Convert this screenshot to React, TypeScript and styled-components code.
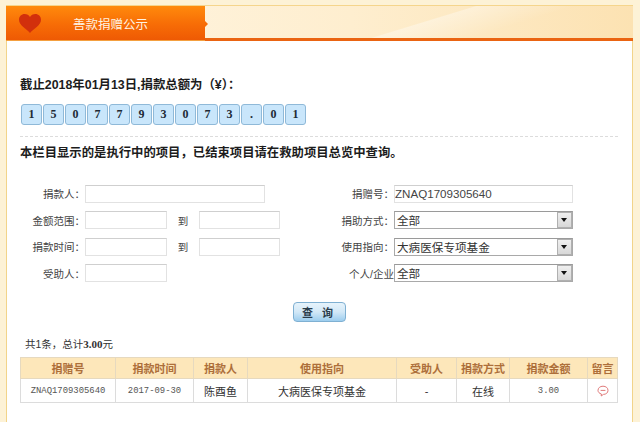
import React from "react";
import styled, { createGlobalStyle } from "styled-components";

const CJK = `"Liberation Sans", "Noto Sans CJK SC", sans-serif`;
const SERIF = `"Liberation Serif", "Noto Sans CJK SC", serif`;
const MONO = `"Liberation Mono", "Noto Sans CJK SC", monospace`;

const GlobalStyle = createGlobalStyle`
  html, body {
    margin: 0;
    padding: 0;
    background: #fdf2d6;
  }
  * {
    box-sizing: border-box;
  }
`;

const Page = styled.div`
  width: 640px;
  height: 422px;
  overflow: hidden;
  padding: 5px 6px 0;
  font-family: ${CJK};
  color: #222;
`;

const Panel = styled.div`
  width: 627px;
  height: 417px;
  background: #fff;
  border-left: 1px solid #f2d48a;
  border-right: 1px solid #f2d48a;
  border-top: 1px solid #f5d58c;
`;

const Banner = styled.div`
  display: flex;
  height: 35px;
  margin: 0 -1px;
  background:
    linear-gradient(163deg, rgba(255, 255, 255, 0) 64%, rgba(255, 255, 255, 0.35) 64.5%, rgba(255, 255, 255, 0) 78%),
    linear-gradient(90deg, #fff6e4 0%, #feeecf 55%, #fce2b2 100%);
  border-bottom: 3px solid #ea6412;
`;

const BannerTab = styled.div`
  position: relative;
  width: 199px;
  height: 35px;
  display: flex;
  align-items: center;
  padding-left: 13px;
  background: linear-gradient(180deg, #ff8a0c 0%, #f76c06 55%, #ee5a04 100%);
  border-bottom: 1px solid #f4a040;

  &::after {
    content: "";
    position: absolute;
    right: -3px;
    top: 15px;
    border-left: 3px solid #f76c06;
    border-top: 3px solid transparent;
    border-bottom: 3px solid transparent;
  }
`;

const Heart = styled.svg`
  width: 22px;
  height: 19px;
`;

const BannerTitle = styled.h1`
  margin: 0 0 0 32px;
  font-size: 12.5px;
  font-weight: 400;
  color: #fff3e2;
  white-space: nowrap;
`;

const Body = styled.div`
  padding: 35px 14px 0 13px;
`;

const TotalLine = styled.div`
  height: 16px;
  line-height: 18px;
  font-size: 12.4px;
  font-weight: 700;
  color: #1c1c1c;
  white-space: nowrap;
`;

const Digits = styled.div`
  display: flex;
  gap: 1px;
  margin: 12px 0 0 1px;
`;

const Digit = styled.span`
  width: 21px;
  height: 21px;
  display: flex;
  align-items: center;
  justify-content: center;
  background: #c9e6fb;
  border: 1px solid #8fb9d8;
  border-radius: 3px;
  font-family: ${SERIF};
  font-size: 12px;
  font-weight: 700;
  color: #1d2a35;
`;

const Dashed = styled.div`
  margin-top: 11px;
  border-top: 1px dashed #dcdcdc;
`;

const Notice = styled.p`
  margin: 7px 0 0;
  height: 16px;
  line-height: 18px;
  font-size: 12.35px;
  font-weight: 700;
  color: #1c1c1c;
  white-space: nowrap;
`;

const SearchForm = styled.form`
  display: grid;
  grid-template-columns: 307px 1fr;
  margin-top: 25px;
`;

const FormColumn = styled.div`
  display: flex;
  flex-direction: column;
  gap: 9px;
`;

const Row = styled.div`
  display: flex;
  align-items: center;
  height: 17.5px;
`;

const Label = styled.label<{ $width: number }>`
  width: ${(p) => p.$width}px;
  flex: none;
  text-align: right;
  font-size: 10.5px;
  color: #444;
  white-space: nowrap;
`;

const TextBox = styled.input<{ $width: number }>`
  width: ${(p) => p.$width}px;
  height: 18px;
  padding: 0;
  border: 1px solid #e2e2e2;
  border-top-color: #cfcfcf;
  background: #fff;
  font-family: ${CJK};
  font-size: 11.6px;
  color: #444;
  outline: none;
`;

const To = styled.span`
  width: 32px;
  text-align: center;
  font-size: 10.5px;
  color: #444;
`;

const Select = styled.div`
  display: flex;
  align-items: center;
  justify-content: space-between;
  width: 179px;
  height: 18px;
  padding: 0 0 0 2px;
  border: 1px solid #a9a9a9;
  border-top-color: #9a9a9a;
  background: #fff;
  font-size: 11.6px;
  color: #333;
`;

const SelectArrow = styled.span`
  position: relative;
  width: 15px;
  height: 16px;
  background: linear-gradient(180deg, #efefef, #d8d8d8);
  border: 1px solid #b0b0b0;

  &::after {
    content: "";
    position: absolute;
    left: 3px;
    top: 5px;
    border-top: 4px solid #111;
    border-left: 3px solid transparent;
    border-right: 3px solid transparent;
  }
`;

const QueryRow = styled.div`
  display: flex;
  justify-content: center;
  margin-top: 20px;
`;

const QueryButton = styled.button`
  width: 53px;
  height: 20px;
  padding: 0;
  border: 1px solid #7fb0d2;
  border-radius: 4px;
  background: linear-gradient(180deg, #e6f3fb 0%, #d2e8f7 50%, #9ccdee 100%);
  font-family: ${CJK};
  font-size: 11px;
  font-weight: 700;
  color: #2a3d4c;
  letter-spacing: 3px;
`;

const Summary = styled.div`
  margin: 14px 0 0 5px;
  height: 16px;
  line-height: 16px;
  font-size: 10.5px;
  color: #333;

  b {
    font-family: ${SERIF};
    font-size: 11px;
  }
`;

const Results = styled.table`
  width: 597px;
  margin-top: 5px;
  border-collapse: collapse;
  table-layout: fixed;
`;

const Head = styled.th<{ $width: number }>`
  width: ${(p) => p.$width}px;
  height: 21px;
  padding: 0;
  background: #fde7ba;
  border: 1px solid #e6d9bf;
  font-size: 11px;
  font-weight: 700;
  color: #ad6f3a;
`;

const Cell = styled.td<{ $mono?: boolean }>`
  height: 24px;
  padding: 0;
  text-align: center;
  border: 1px solid #dcdcdc;
  font-family: ${(p) => (p.$mono ? MONO : CJK)};
  font-size: ${(p) => (p.$mono ? "8.9px" : "11px")};
  font-weight: 400;
  color: ${(p) => (p.$mono ? "#555" : "#333")};
`;

const CommentIcon = styled.svg`
  width: 12px;
  height: 12px;
  vertical-align: middle;
`;

const DIGITS = "1507793073.01".split("");

const COLUMNS = [
  { title: "捐赠号", width: 95 },
  { title: "捐款时间", width: 78 },
  { title: "捐款人", width: 54 },
  { title: "使用指向", width: 149 },
  { title: "受助人", width: 60 },
  { title: "捐款方式", width: 53 },
  { title: "捐款金额", width: 78 },
  { title: "留言", width: 30 },
];

export default function App() {
  return (
    <>
      <GlobalStyle />
      <Page>
        <Panel>
          <Banner>
            <BannerTab>
              <Heart viewBox="0 0 22 19">
                <path
                  d="M11 19 C7 14.5 0 11.5 0 5.8 C0 2.2 2.6 0 5.6 0 C8 0 10 1.2 11 3 C12 1.2 14 0 16.4 0 C19.4 0 22 2.2 22 5.8 C22 11.5 15 14.5 11 19 Z"
                  fill="#d2300c"
                />
              </Heart>
              <BannerTitle>善款捐赠公示</BannerTitle>
            </BannerTab>
          </Banner>
          <Body>
            <TotalLine>截止2018年01月13日,捐款总额为（¥）：</TotalLine>
            <Digits>
              {DIGITS.map((d, i) => (
                <Digit key={i}>{d}</Digit>
              ))}
            </Digits>
            <Dashed />
            <Notice>本栏目显示的是执行中的项目，已结束项目请在救助项目总览中查询。</Notice>

            <SearchForm>
              <FormColumn>
                <Row>
                  <Label $width={65}>捐款人：</Label>
                  <TextBox $width={180} />
                </Row>
                <Row>
                  <Label $width={65}>金额范围：</Label>
                  <TextBox $width={82} />
                  <To>到</To>
                  <TextBox $width={81} />
                </Row>
                <Row>
                  <Label $width={65}>捐款时间：</Label>
                  <TextBox $width={82} />
                  <To>到</To>
                  <TextBox $width={81} />
                </Row>
                <Row>
                  <Label $width={65}>受助人：</Label>
                  <TextBox $width={82} />
                </Row>
              </FormColumn>
              <FormColumn>
                <Row>
                  <Label $width={67}>捐赠号：</Label>
                  <TextBox $width={179} defaultValue="ZNAQ1709305640" />
                </Row>
                <Row>
                  <Label $width={67}>捐助方式：</Label>
                  <Select>
                    全部
                    <SelectArrow />
                  </Select>
                </Row>
                <Row>
                  <Label $width={67}>使用指向：</Label>
                  <Select>
                    大病医保专项基金
                    <SelectArrow />
                  </Select>
                </Row>
                <Row>
                  <Label $width={67}>个人/企业</Label>
                  <Select>
                    全部
                    <SelectArrow />
                  </Select>
                </Row>
              </FormColumn>
            </SearchForm>

            <QueryRow>
              <QueryButton type="button">查 询</QueryButton>
            </QueryRow>

            <Summary>
              共1条，总计<b>3.00</b>元
            </Summary>

            <Results>
              <thead>
                <tr>
                  {COLUMNS.map((c) => (
                    <Head key={c.title} $width={c.width}>
                      {c.title}
                    </Head>
                  ))}
                </tr>
              </thead>
              <tbody>
                <tr>
                  <Cell $mono>ZNAQ1709305640</Cell>
                  <Cell $mono>2017-09-30</Cell>
                  <Cell>陈酉鱼</Cell>
                  <Cell>大病医保专项基金</Cell>
                  <Cell>-</Cell>
                  <Cell>在线</Cell>
                  <Cell $mono>3.00</Cell>
                  <Cell>
                    <CommentIcon viewBox="0 0 12 12">
                      <path
                        d="M6 1.2 C9 1.2 11 3 11 5.4 C11 7.8 9 9.4 6.4 9.4 L4.2 11 L4.4 9 C2.4 8.4 1 7.2 1 5.4 C1 3 3 1.2 6 1.2 Z M3.6 5.4 H8.4"
                        fill="none"
                        stroke="#e07a7a"
                        strokeWidth="1"
                      />
                    </CommentIcon>
                  </Cell>
                </tr>
              </tbody>
            </Results>
          </Body>
        </Panel>
      </Page>
    </>
  );
}
